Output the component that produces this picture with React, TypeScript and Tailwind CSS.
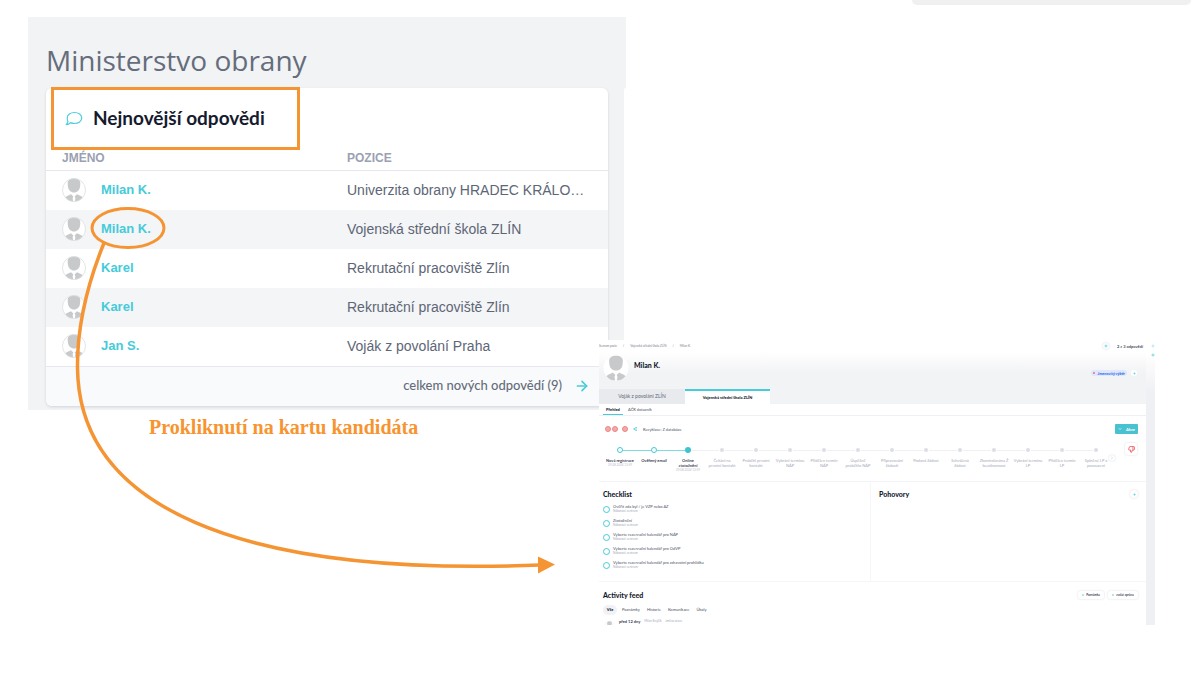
import React from "react";
import { ArrowRight, ChevronDown, ChevronRight, Plus, Share2, ThumbsDown } from "lucide-react";

const answers = [
  { name: "Milan K.", position: "Univerzita obrany HRADEC KRÁLO…" },
  { name: "Milan K.", position: "Vojenská střední škola ZLÍN" },
  { name: "Karel", position: "Rekrutační pracoviště Zlín" },
  { name: "Karel", position: "Rekrutační pracoviště Zlín" },
  { name: "Jan S.", position: "Voják z povolání Praha" },
];

const steps = [
  { label: ["Nová registrace"], date: "29.08.2024 13:59", state: "done" },
  { label: ["Ověřený email"], state: "done" },
  { label: ["Online", "ztotožnění"], date: "29.08.2024 13:59", state: "current" },
  { label: ["Čekání na", "prvotní kontakt"], state: "todo" },
  { label: ["Proběhl prvotní", "kontakt"], state: "todo" },
  { label: ["Vybrání termínu", "NÁP"], state: "todo" },
  { label: ["Přidělen termín", "NÁP"], state: "todo" },
  { label: ["Úspěšně", "proběhlo NÁP"], state: "todo" },
  { label: ["Připravování", "žádosti"], state: "todo" },
  { label: ["Podaná žádost"], state: "todo" },
  { label: ["Schválená", "žádost"], state: "todo" },
  { label: ["Zkontrolována Ž", "bezúhonnost"], state: "todo" },
  { label: ["Vybrání termínu", "LP"], state: "todo" },
  { label: ["Přidělen termín", "LP"], state: "todo" },
  { label: ["Splněné LP a", "posouzení"], state: "todo" },
];

const checklist = [
  "Ověřit zda byl / je VZP nebo AZ",
  "Ztotožnění",
  "Vyberte rezervační kalendář pro NÁP",
  "Vyberte rezervační kalendář pro OdVP",
  "Vyberte rezervační kalendář pro zdravotní prohlídku",
];

const feedFilters = ["Poznámky", "Historie", "Komunikace", "Úkoly"];

function Avatar({ className, ring = true }: { className: string; ring?: boolean }) {
  return (
    <svg viewBox="0 0 24 24" className={className} aria-hidden="true">
      <circle cx="12" cy="12" r="11.5" fill="#fff" />
      <path
        d="M12 .6C8 .6 5.500 2.400 5.700 5.500c.1 2 .1 3.200.7 5 .3 1 .8 1.700 1.600 2.400 1 .9 2.300 1.500 4 1.500s3-.6 4-1.500c.8-.7 1.300-1.400 1.600-2.400.6-1.800.6-3 .7-5C18.500 2.400 16 .6 12 .6z"
        fill="#c8c9cb"
      />
      <path
        d="M9 16.200l2.400 2.200-.8 1.600.6 3.400c-3.200 0-6-1.400-7.900-3.900 1-1.700 3.700-1.900 5.700-3.300zM15 16.200l-2.400 2.200.8 1.600-.6 3.400c3.200 0 6-1.400 7.900-3.900-1-1.700-3.700-1.900-5.700-3.300z"
        fill="#c8c9cb"
      />
      {ring && <circle cx="12" cy="12" r="11.500" fill="none" stroke="#dcdde0" strokeWidth=".8" />}
    </svg>
  );
}

function SpeechBubble() {
  return (
    <svg viewBox="0 0 18 16" className="h-4 w-[18px]" fill="none" stroke="#4cd0dc" strokeWidth="1.200" aria-hidden="true">
      <path
        d="M9.500 1.500c4.100 0 7.200 2.400 7.200 5.500s-3.100 5.500-7.200 5.500c-1.500 0-2.900-.3-4-.9-1 1.300-2.500 2-4.300 2 .9-.9 1.500-2 1.700-3.200C2.500 9.500 2.200 8.300 2.200 7c0-3.100 3.200-5.500 7.300-5.500z"
        strokeLinejoin="round"
      />
    </svg>
  );
}

function AnswersPanel() {
  return (
    <section className="flex h-[393px] w-[598px] gap-4 overflow-hidden bg-[#f2f3f5] pl-[18px]">
      <div className="flex w-[562px] shrink-0 flex-col">
        <h1 className="flex h-[71px] items-end pb-[9px] font-['Open_Sans'] text-[28px] leading-[38px] text-[#656d7b]">
          Ministerstvo obrany
        </h1>
        <div className="rounded-md bg-white shadow-[0_1px_3px_rgba(40,50,70,0.16)]">
          <div className="-mt-px ml-[5px] flex h-[63px] w-[249px] items-center gap-[10px] border-[3px] border-[#f59433] pl-[11px]">
            <SpeechBubble />
            <h2 className="font-[Lato] text-[19px] font-bold text-[#151b2e]">Nejnovější odpovědi</h2>
          </div>
          <table className="w-full table-fixed border-collapse font-['Liberation_Sans'] text-left text-[14px] leading-[18px] text-[#5d6676]">
            <thead>
              <tr className="h-5 border-b border-[#e6e8ec] text-[12px] leading-4 text-[#9aa1b2]">
                <th className="w-[301px] pl-4 pb-1 font-bold">JMÉNO</th>
                <th className="pb-1 font-bold">POZICE</th>
              </tr>
            </thead>
            <tbody>
              {answers.map((a, i) => (
                <tr key={i} className="h-[39px] even:bg-[#f4f5f7]">
                  <td className="p-0 pl-4">
                    <div className="flex items-center gap-[15px]">
                      <Avatar className="size-6" />
                      <a href="#kandidat" className="text-[13px] font-bold text-[#45cbd9]">
                        {a.name}
                      </a>
                    </div>
                  </td>
                  <td className="p-0">{a.position}</td>
                </tr>
              ))}
            </tbody>
          </table>
          <div className="flex h-10 items-center justify-end rounded-b-md border-t border-[#e6e8ec] bg-[#f9fafb] pr-[18px]">
            <a href="#odpovedi" className="flex items-center gap-3 font-[Lato] text-[13px] font-medium text-[#656d7b]">
              celkem nových odpovědí (9)
              <ArrowRight className="h-[18px] w-4 text-[#45cbd9]" strokeWidth={2.4} />
            </a>
          </div>
        </div>
      </div>
      <div className="mt-[71px] grow rounded-tl-md bg-white" />
    </section>
  );
}

function Step({ step, first, last }: { step: (typeof steps)[number]; first: boolean; last: boolean }) {
  const active = step.state !== "todo";
  const before = first ? "bg-transparent" : active ? "bg-[#7fdce5]" : "bg-[#f0f1f4]";
  const after = step.state === "done" ? "bg-[#7fdce5]" : last ? "bg-transparent" : "bg-[#f0f1f4]";
  return (
    <li className="flex w-[34px] flex-col items-center">
      <div className="flex h-[6px] w-full items-center">
        <span className={"h-px grow " + before} />
        {step.state === "done" && <span className="size-[6px] rounded-full border border-[#3fc9d6] bg-white" />}
        {step.state === "current" && <span className="size-[6px] rounded-full bg-[#3fc3cf]" />}
        {step.state === "todo" && <span className="mx-px size-1 rounded-full bg-[#dcdee6]" />}
        <span className={"h-px grow " + after} />
      </div>
      <div
        className={
          "mt-[5px] text-center leading-[5px] whitespace-nowrap " +
          (active ? "font-bold text-[#3b4254]" : "text-[#a3a9b9]")
        }
      >
        {step.label.map((line) => (
          <div key={line}>{line}</div>
        ))}
        {step.date && <div className="text-[3px] font-normal text-[#b9bdc9]">{step.date}</div>}
      </div>
    </li>
  );
}

function CandidatePanel() {
  return (
    <section className="flex h-[285px] w-[556px] flex-col overflow-hidden bg-white font-[Lato] text-[4px] leading-[5px] text-[#4b5263]">
      <div className="flex h-3 shrink-0 items-center justify-between">
        <nav className="flex gap-[6px] text-[3px] text-[#777e8d]">
          <a href="#pozice">Seznam pozic</a>
          <span>/</span>
          <a href="#skola">Vojenská střední škola ZLÍN</a>
          <span>/</span>
          <span>Milan K.</span>
        </nav>
        <div className="flex items-center gap-2">
          <button aria-label="Předchozí" className="flex size-[6px] items-center justify-center rounded-full text-[#45cbd9] shadow-[0_0_2px_rgba(40,50,70,0.25)]">
            <Plus className="size-1" strokeWidth={4} />
          </button>
          <span className="font-bold">2 z 3 odpovědí</span>
          <button aria-label="Další" className="flex size-1 items-center text-[#45cbd9]">
            <Plus className="size-1" />
          </button>
        </div>
      </div>
      <div className="flex min-h-0 grow">
        <div className="flex min-w-0 grow flex-col">
          <header className="flex h-[52px] shrink-0 flex-col bg-linear-to-b from-white to-[#f2f3f5] to-40%">
            <div className="flex h-[37px] shrink-0 items-start pl-1">
              <Avatar className="mt-[3px] size-[26px]" ring={false} />
              <h2 className="mt-[9px] ml-[5px] grow text-[7px] leading-2 font-black text-[#151b2e]">Milan K.</h2>
              <div className="mt-[18px] mr-[9px] flex items-center gap-1">
                <span className="flex h-[6px] items-center gap-[3px] rounded-sm bg-[#dfe8fc] px-[2px] font-bold text-[#2f63ea] italic">
                  <span className="size-[2px] rounded-full bg-[#f07070]" />
                  Jmenovitý výběr
                </span>
                <button aria-label="Upravit" className="flex size-[6px] items-center justify-center rounded-sm bg-white text-[#45cbd9]">
                  <Plus className="size-[3px]" strokeWidth={4} />
                </button>
              </div>
            </div>
            <div className="flex grow">
              <button className="w-[86px] bg-[#e8eaee] text-[5px] text-[#5d6676]">Voják z povolání ZLÍN</button>
              <button className="w-[85px] border-t-2 border-[#45cbd9] bg-white font-black text-[#151b2e]">
                Vojenská střední škola ZLÍN
              </button>
            </div>
          </header>
          <nav className="flex h-3 shrink-0 gap-[3px] border-b border-[#eff0f2] pl-1">
            <button className="w-5 border-b border-[#45cbd9] font-black text-[#151b2e]">Přehled</button>
            <button className="px-[2px]">AČR dotazník</button>
          </nav>
          <div className="flex h-[66px] shrink-0 flex-col border-b border-[#f3f4f6] pt-2">
            <div className="flex h-[10px] items-center pr-2 pl-[6px]">
              <span className="size-[6px] rounded-full border border-[#ef8585] bg-[#f4a9a9]" />
              <span className="ml-px size-[6px] rounded-full border border-[#ef8585] bg-[#f4a9a9]" />
              <span className="ml-1 size-[6px] rounded-full border border-[#ef8585] bg-[#f4a9a9]" />
              <Share2 className="ml-[5px] size-1 text-[#45cbd9]" strokeWidth={3} />
              <span className="ml-[6px] grow">Recyklace: Z databáze</span>
              <button className="flex h-[10px] w-[23px] items-center justify-center gap-1 rounded-[1px] bg-[#48c2d1] font-bold text-white">
                <ChevronDown className="size-1" strokeWidth={4} />
                Akce
              </button>
            </div>
            <div className="mt-[13px] flex items-start pl-1">
              <ol className="flex text-[4px]">
                {steps.map((s, i) => (
                  <Step key={i} step={s} first={i === 0} last={i === steps.length - 1} />
                ))}
              </ol>
              <button aria-label="Další kroky" className="mt-2 -ml-1 flex size-[6px] items-center justify-center rounded-full text-[#45cbd9] shadow-[0_0_2px_rgba(40,50,70,0.2)]">
                <ChevronRight className="size-1" />
              </button>
              <button aria-label="Zamítnout" className="-mt-1 ml-[10px] flex size-3 items-center justify-center rounded-xs text-[#ee5f63] shadow-[0_0_2px_rgba(40,50,70,0.2)]">
                <ThumbsDown className="size-[7px]" strokeWidth={3} />
              </button>
            </div>
          </div>
          <div className="flex h-[100px] shrink-0 border-b border-[#f5f6f7]">
            <div className="w-[272px] border-r border-[#f5f6f7] pt-2 pl-1">
              <h3 className="text-[7px] leading-2 font-black text-[#151b2e]">Checklist</h3>
              <ul className="mt-1 flex flex-col">
                {checklist.map((item) => (
                  <li key={item}>
                    <label className="flex h-[14px] items-center gap-[3px]">
                      <input type="checkbox" className="size-[7px] appearance-none rounded-full border border-[#45cbd9] bg-white" />
                      <span className="-mt-px">
                        {item}
                        <span className="block text-[3px] text-[#a3a9b9]">Náborové centrum</span>
                      </span>
                    </label>
                  </li>
                ))}
              </ul>
            </div>
            <div className="flex grow items-start justify-between pt-2 pr-2 pl-2">
              <h3 className="text-[7px] leading-2 font-black text-[#151b2e]">Pohovory</h3>
              <button aria-label="Přidat pohovor" className="flex size-2 items-center justify-center rounded-sm text-[#45cbd9] shadow-[0_0_2px_rgba(40,50,70,0.2)]">
                <Plus className="size-[3px]" strokeWidth={4} />
              </button>
            </div>
          </div>
          <div className="flex flex-col pt-2 pr-2 pl-1">
            <div className="flex h-[10px] items-center gap-1">
              <h3 className="grow text-[7px] leading-2 font-black text-[#151b2e]">Activity feed</h3>
              <button className="flex h-2 w-[26px] items-center justify-center gap-[2px] rounded-xs font-bold text-[#3b4254] shadow-[0_0_2px_rgba(40,50,70,0.2)]">
                <Plus className="size-[2px] text-[#2bc5a8]" strokeWidth={5} />
                <span className="text-[3px]">Poznámka</span>
              </button>
              <button className="flex h-2 w-[30px] items-center justify-center gap-[2px] rounded-xs font-bold text-[#3b4254] shadow-[0_0_2px_rgba(40,50,70,0.2)]">
                <Plus className="size-[2px] text-[#2bc5a8]" strokeWidth={5} />
                <span className="text-[3px]">zaslat zprávu</span>
              </button>
            </div>
            <div className="mt-1 flex h-[11px] items-center gap-[7px]">
              <button className="-mr-[2px] h-[10px] w-[14px] rounded-full bg-[#f1f2f5] font-black text-[#151b2e]">Vše</button>
              {feedFilters.map((f) => (
                <button key={f}>{f}</button>
              ))}
            </div>
            <div className="mt-1 flex gap-1 pl-[2px] text-[#a3a9b9]">
              <Avatar className="mt-[2px] size-[9px]" />
              <span className="ml-px font-bold text-[#3b4254]">před 12 dny</span>
              <span className="text-[3px]">Milan Krejčík</span>
              <span className="text-[3px]">změna stavu</span>
            </div>
          </div>
        </div>
        <div className="flex w-[9px] shrink-0 items-start justify-end bg-linear-to-b from-white to-[#eff0f3] to-15%">
          <Plus className="mt-px size-1 text-[#45cbd9]" strokeWidth={4} />
        </div>
      </div>
    </section>
  );
}

export default function App() {
  return (
    <main className="relative min-h-screen overflow-hidden bg-white pb-16">
      <div className="flex h-[17px] justify-end pr-[9px]">
        <div className="h-[5px] w-[279px] rounded-b-md bg-[#f0f0f1]" />
      </div>
      <div className="pl-7">
        <AnswersPanel />
      </div>
      <p className="mt-[5px] pl-[149px] font-['Liberation_Serif'] text-[20px] leading-6 font-bold text-[#f7942f]">
        Prokliknutí na kartu kandidáta
      </p>
      <div className="absolute top-[340px] left-[599px]">
        <CandidatePanel />
      </div>
      <svg
        viewBox="0 0 600 600"
        className="pointer-events-none absolute top-0 left-0 size-[600px]"
        fill="none"
        stroke="#f59433"
        strokeWidth="3"
        aria-hidden="true"
      >
        <ellipse cx="128" cy="228" rx="36" ry="19.500" />
        <path d="M104 243C89 280 77 325 77.500 368C79 505 235 577 540 565" strokeWidth="3.500" />
        <path d="M538 556.500L555 564.500L538 573.500Z" fill="#f59433" stroke="none" />
      </svg>
    </main>
  );
}
